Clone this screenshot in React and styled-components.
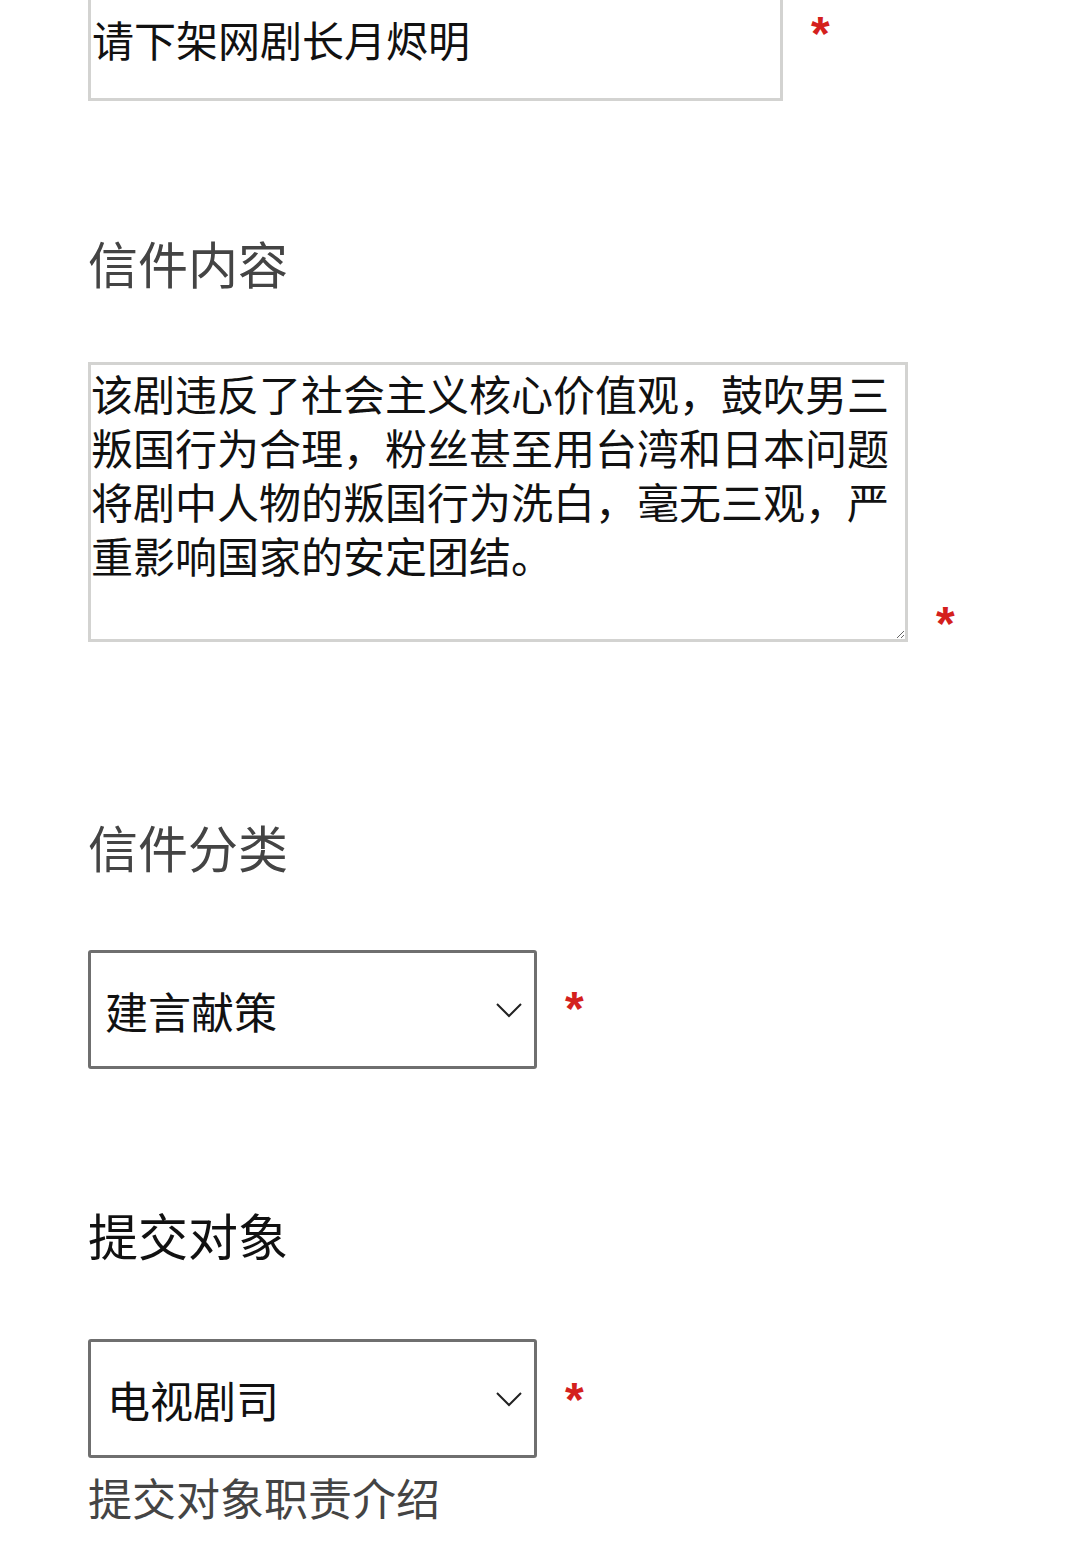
import React from 'react';
import styled, { createGlobalStyle } from 'styled-components';

const GlobalStyle = createGlobalStyle`
    html, body {
        margin: 0;
        padding: 0;
        background: #ffffff;
    }
    body {
        font-family: "Noto Sans CJK SC", "Noto Sans", sans-serif;
        overflow: hidden;
    }
`;

const Page = styled.div`
    width: 1080px;
    height: 1551px;
    padding-left: 88px;
    box-sizing: border-box;
    overflow: hidden;
    background: #ffffff;
`;

const FieldRow = styled.div`
    display: flex;
    flex-direction: row;
    align-items: flex-start;
    gap: 28px;
    margin-top: ${(p) => p.top}px;
`;

const TextBox = styled.div`
    width: 695px;
    height: 121px;
    box-sizing: border-box;
    border: 3px solid #d3d3d1;
    padding: 0 0 3px 1px;
    display: flex;
    align-items: center;
    font-size: 42px;
    color: #111;
    line-height: 1;
`;

const TextArea = styled.textarea`
    width: 820px;
    height: 280px;
    box-sizing: border-box;
    border: 3px solid #d3d3d1;
    padding: 1px 0;
    margin: 0;
    font-family: "Noto Sans CJK SC", "Noto Sans", sans-serif;
    font-size: 42px;
    line-height: 54px;
    color: #111;
    background: #fff;
    resize: both;
    outline: none;
    overflow: hidden;
`;

const Star = styled.span`
    font-family: "Liberation Sans", Arial, sans-serif;
    font-weight: bold;
    font-size: 48px;
    line-height: 30px;
    color: #d4201d;
    margin-top: ${(p) => p.offset}px;
`;

const Heading = styled.div`
    font-size: 50px;
    line-height: 60px;
    color: ${(p) => (p.dark ? '#111' : '#444')};
    margin-top: ${(p) => p.top}px;
`;

const SelectBox = styled.div`
    width: 449px;
    height: 119px;
    box-sizing: border-box;
    border: 3px solid #6f6f6f;
    border-radius: 3px;
    display: flex;
    align-items: center;
    justify-content: space-between;
    padding: 0 11px 0 ${(p) => p.indent}px;
    font-size: 43px;
    color: #111;
`;

const Chevron = styled.svg`
    width: 28px;
    height: 16px;
    flex-shrink: 0;
`;

const Note = styled.div`
    font-size: 44px;
    line-height: 50px;
    color: #444;
    margin-top: 14px;
`;

function Select({ value, indent }) {
    return (
        <SelectBox indent={indent}>
            <span>{value}</span>
            <Chevron viewBox="0 0 28 16">
                <polyline points="2,2 14,14 26,2" fill="none" stroke="#222" strokeWidth="2" />
            </Chevron>
        </SelectBox>
    );
}

export default function App() {
    return (
        <Page>
            <GlobalStyle />
            <FieldRow top={-20}>
                <TextBox>请下架网剧长月烬明</TextBox>
                <Star offset={39}>*</Star>
            </FieldRow>

            <Heading top={131}>信件内容</Heading>
            <FieldRow top={70}>
                <TextArea
                    readOnly
                    defaultValue="该剧违反了社会主义核心价值观，鼓吹男三叛国行为合理，粉丝甚至用台湾和日本问题将剧中人物的叛国行为洗白，毫无三观，严重影响国家的安定团结。"
                />
                <Star offset={247}>*</Star>
            </FieldRow>

            <Heading top={174}>信件分类</Heading>
            <FieldRow top={74}>
                <Select value="建言献策" indent={14} />
                <Star offset={44}>*</Star>
            </FieldRow>

            <Heading top={135} dark>提交对象</Heading>
            <FieldRow top={75}>
                <Select value="电视剧司" indent={16} />
                <Star offset={46}>*</Star>
            </FieldRow>
            <Note>提交对象职责介绍</Note>
        </Page>
    );
}
